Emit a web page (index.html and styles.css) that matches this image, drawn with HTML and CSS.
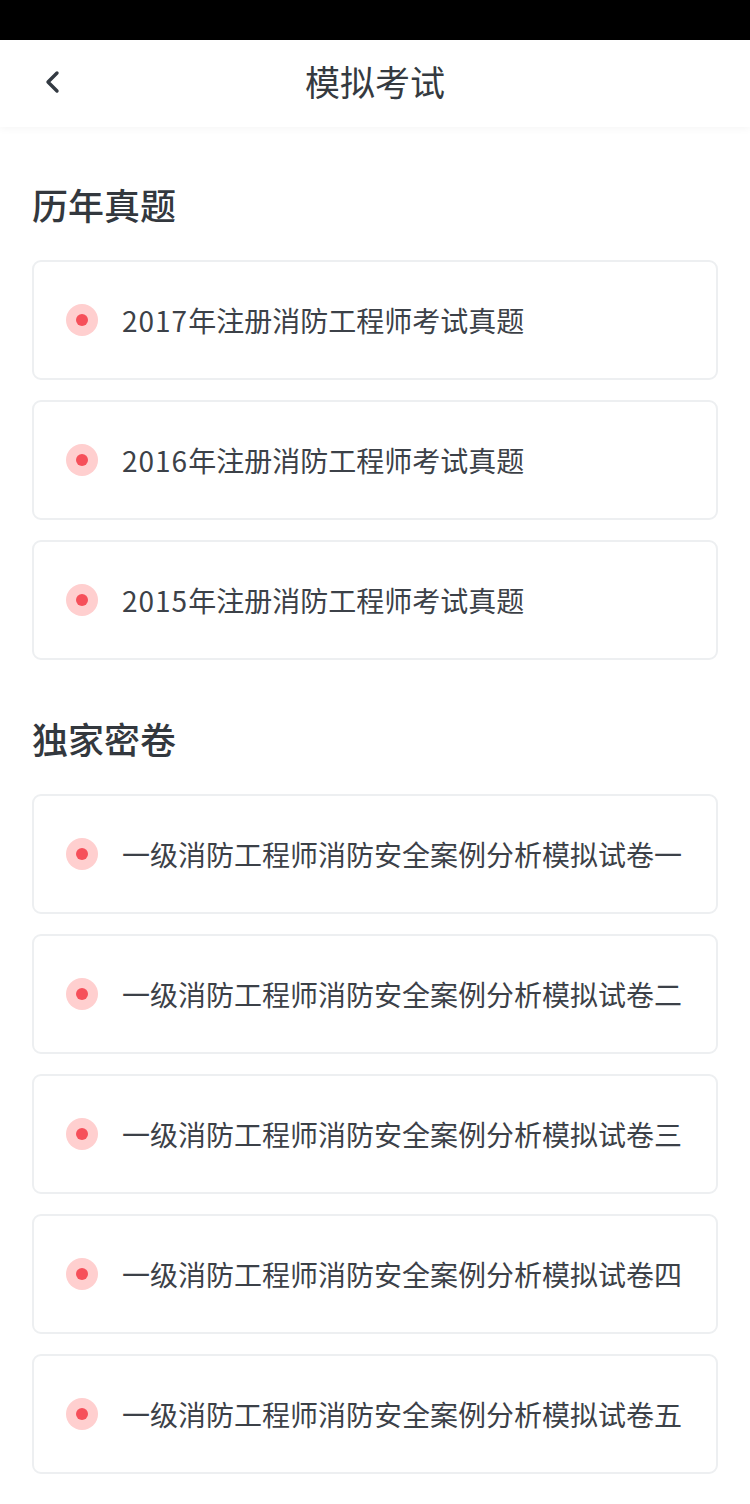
FILE: index.html
```html
<!DOCTYPE html>
<html lang="zh-CN">
<head>
<meta charset="utf-8">
<title>模拟考试</title>
<link rel="stylesheet" href="styles.css">
</head>
<body>
<div class="status-bar"></div>
<header class="nav">
  <span class="back">
    <svg width="20" height="24" viewBox="0 0 20 24"><path d="M14 3 L5 12 L14 21" fill="none" stroke="#333a42" stroke-width="3.4" stroke-linecap="round" stroke-linejoin="round"/></svg>
  </span>
  <h1 class="nav-title">模拟考试</h1>
</header>
<main class="content">
  <section class="section first">
    <h2 class="section-title">历年真题</h2>
    <ul class="list">
      <li class="card"><span class="dot"></span><span class="card-text"><span class="num">2017</span>年注册消防工程师考试真题</span></li>
      <li class="card"><span class="dot"></span><span class="card-text"><span class="num">2016</span>年注册消防工程师考试真题</span></li>
      <li class="card"><span class="dot"></span><span class="card-text"><span class="num">2015</span>年注册消防工程师考试真题</span></li>
    </ul>
  </section>
  <section class="section second">
    <h2 class="section-title">独家密卷</h2>
    <ul class="list">
      <li class="card"><span class="dot"></span><span class="card-text">一级消防工程师消防安全案例分析模拟试卷一</span></li>
      <li class="card"><span class="dot"></span><span class="card-text">一级消防工程师消防安全案例分析模拟试卷二</span></li>
      <li class="card"><span class="dot"></span><span class="card-text">一级消防工程师消防安全案例分析模拟试卷三</span></li>
      <li class="card"><span class="dot"></span><span class="card-text">一级消防工程师消防安全案例分析模拟试卷四</span></li>
      <li class="card"><span class="dot"></span><span class="card-text">一级消防工程师消防安全案例分析模拟试卷五</span></li>
    </ul>
  </section>
</main>
</body>
</html>
```
FILE: styles.css
```css
* { box-sizing: border-box; }
html, body { margin: 0; padding: 0; background: #fff; }
body {
  font-family: "Noto Sans CJK SC", "Noto Sans", sans-serif;
  color: #3a3e45;
}
.status-bar { height: 40px; background: #000; }
.nav {
  position: relative;
  height: 87px;
  display: flex;
  align-items: center;
  justify-content: center;
  padding-bottom: 6px;
  background: #fff;
  box-shadow: 0 2px 8px rgba(0, 0, 0, 0.04);
}
.back {
  position: absolute;
  left: 43px;
  top: 30px;
  width: 20px;
  height: 24px;
  display: flex;
}
.nav-title {
  margin: 0;
  font-size: 35px;
  font-weight: 400;
  color: #353a40;
  line-height: 1;
}
.content { padding: 0 32px; }
.section.first { padding-top: 52px; }
.section.second { padding-top: 53px; }
.section-title {
  margin: 0 0 31px;
  font-size: 36px;
  line-height: 50px;
  font-weight: 500;
  color: #33383e;
}
.list {
  list-style: none;
  margin: 0;
  padding: 0;
  display: flex;
  flex-direction: column;
  gap: 20px;
}
.card {
  height: 120px;
  border: 2px solid #edeff1;
  border-radius: 9px;
  display: flex;
  align-items: center;
  padding-left: 32px;
}
.dot {
  width: 32px;
  height: 32px;
  border-radius: 50%;
  background: #ffcfcf;
  display: flex;
  align-items: center;
  justify-content: center;
  flex-shrink: 0;
}
.dot::after {
  content: "";
  width: 12px;
  height: 12px;
  border-radius: 50%;
  background: #f6505a;
}
.card-text {
  margin-left: 24px;
  font-size: 28px;
  line-height: 1;
  color: #3c4148;
  white-space: nowrap;
}
.num { letter-spacing: 1px; }
```
